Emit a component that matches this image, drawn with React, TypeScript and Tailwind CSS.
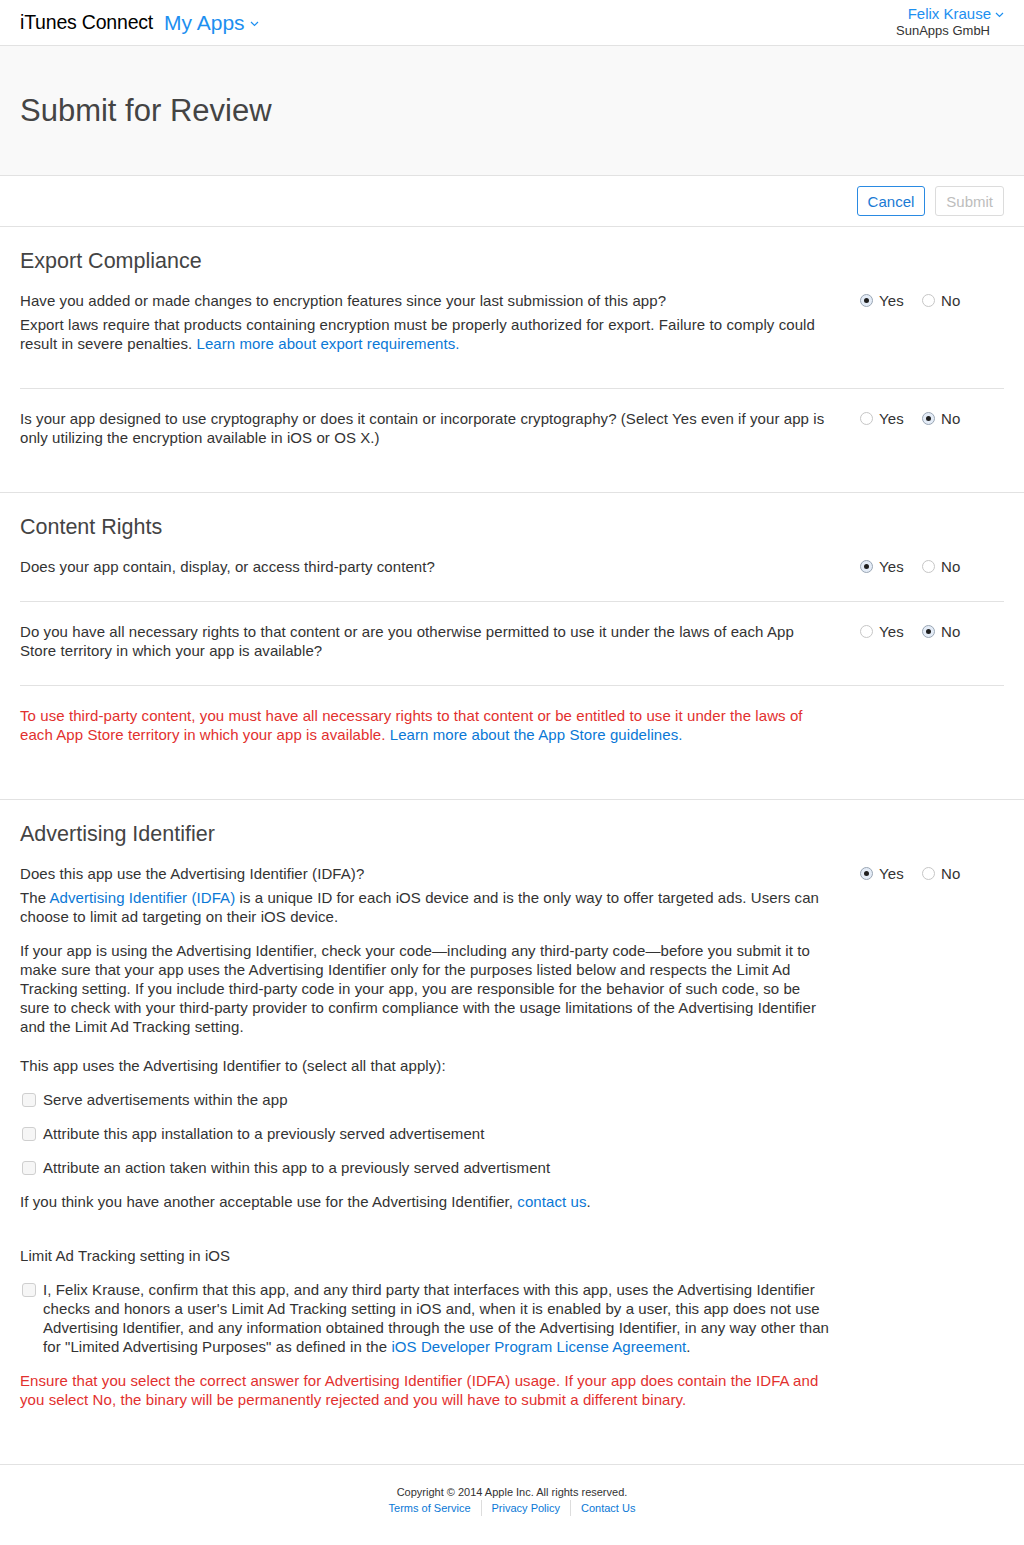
import clsx from "clsx";

const font = { fontFamily: '"Liberation Sans", Arial, sans-serif' };

function Radio({ checked }: { checked?: boolean }) {
  return (
    <span
      className={clsx(
        "flex h-[13px] w-[13px] items-center justify-center rounded-full border",
        checked ? "border-[#9aa6b4] bg-[#e4ecf7]" : "border-[#c6c6c6] bg-white"
      )}
    >
      {checked && <span className="h-[5px] w-[5px] rounded-full bg-[#1f1f1f]" />}
    </span>
  );
}

function YesNo({ yes }: { yes: boolean }) {
  return (
    <div className="flex h-[19px] items-center pl-[2px] text-[15px] text-[#333]">
      <label className="flex w-[62px] items-center gap-[6px]">
        <Radio checked={yes} />
        <span>Yes</span>
      </label>
      <label className="flex items-center gap-[6px]">
        <Radio checked={!yes} />
        <span>No</span>
      </label>
    </div>
  );
}

function Check() {
  return <span className="mt-[3px] h-[14px] w-[14px] shrink-0 rounded-[3px] border border-[#cfcfcf] bg-[#f6f6f6]" />;
}

function Link({ children }: { children: React.ReactNode }) {
  return <a className="text-[#0a78d6]">{children}</a>;
}

export default function App() {
  return (
    <div style={font} className="min-h-[1545px] bg-white text-[15px] leading-[19px] tracking-[0.08px] text-[#333]">
      {/* top bar */}
      <header className="flex h-[46px] items-center justify-between border-b border-[#e2e2e2] px-5 tracking-normal">
        <div className="flex items-center">
          <span className="text-[19.5px] tracking-[-0.2px] text-black">iTunes Connect</span>
          <span className="ml-[11px] flex items-center text-[21px] text-[#1d8ff0]">
            My Apps
            <svg className="ml-[5px] mt-[3px]" width="9" height="6" viewBox="0 0 9 6">
              <path d="M1 1l3.5 3.5L8 1" fill="none" stroke="#1d8ff0" strokeWidth="1.2" />
            </svg>
          </span>
        </div>
        <div className="mt-[5px] flex flex-col items-end self-start">
          <span className="flex items-center text-[15px] leading-[18px] text-[#1d8ff0]">
            Felix Krause
            <svg className="ml-[4px] mt-[2px]" width="9" height="6" viewBox="0 0 9 6">
              <path d="M1 1l3.5 3.5L8 1" fill="none" stroke="#1d8ff0" strokeWidth="1.2" />
            </svg>
          </span>
          <span className="mr-[14px] text-[13px] leading-[16px] text-[#333]">SunApps GmbH</span>
        </div>
      </header>

      {/* title */}
      <div className="flex h-[130px] items-center border-b border-[#e2e2e2] bg-[#f9f9f9] px-5">
        <h1 className="text-[31px] tracking-normal text-[#444]">Submit for Review</h1>
      </div>

      {/* actions */}
      <div className="flex h-[51px] items-center justify-end gap-[10px] border-b border-[#e2e2e2] px-5 tracking-normal">
        <button className="h-[30px] rounded-[3px] border border-[#2a8ae2] px-[10px] text-[15px] text-[#1a7ad4]">Cancel</button>
        <button className="h-[30px] rounded-[3px] border border-[#dcdcdc] px-[10px] text-[15px] text-[#bdbdbd]">Submit</button>
      </div>

      {/* Export Compliance */}
      <section className="border-b border-[#e2e2e2] px-5 pt-[21px]">
        <h2 className="text-[21.5px] leading-[26px] tracking-normal text-[#444]">Export Compliance</h2>
        <div className="flex border-b border-[#e2e2e2] pt-[17px] pb-[35px]">
          <div className="w-[838px]">
            <p>Have you added or made changes to encryption features since your last submission of this app?</p>
            <p className="mt-[5px]">
              Export laws require that products containing encryption must be properly authorized for export. Failure to comply could
              <br />
              result in severe penalties. <Link>Learn more about export requirements.</Link>
            </p>
          </div>
          <YesNo yes />
        </div>
        <div className="flex pt-5 pb-[45px]">
          <div className="w-[838px]">
            <p>
              Is your app designed to use cryptography or does it contain or incorporate cryptography? (Select Yes even if your app is
              <br />
              only utilizing the encryption available in iOS or OS X.)
            </p>
          </div>
          <YesNo yes={false} />
        </div>
      </section>

      {/* Content Rights */}
      <section className="border-b border-[#e2e2e2] px-5 pt-[21px]">
        <h2 className="text-[21.5px] leading-[26px] tracking-normal text-[#444]">Content Rights</h2>
        <div className="flex border-b border-[#e2e2e2] pt-[17px] pb-[25px]">
          <div className="w-[838px]">
            <p>Does your app contain, display, or access third-party content?</p>
          </div>
          <YesNo yes />
        </div>
        <div className="flex border-b border-[#e2e2e2] pt-5 pb-[25px]">
          <div className="w-[838px]">
            <p>
              Do you have all necessary rights to that content or are you otherwise permitted to use it under the laws of each App
              <br />
              Store territory in which your app is available?
            </p>
          </div>
          <YesNo yes={false} />
        </div>
        <div className="pt-5 pb-[55px]">
          <p className="w-[838px] text-[#e2302e]">
            To use third-party content, you must have all necessary rights to that content or be entitled to use it under the laws of
            <br />
            each App Store territory in which your app is available. <Link>Learn more about the App Store guidelines.</Link>
          </p>
        </div>
      </section>

      {/* Advertising Identifier */}
      <section className="border-b border-[#e2e2e2] px-5 pt-[21px] pb-[55px]">
        <h2 className="text-[21.5px] leading-[26px] tracking-normal text-[#444]">Advertising Identifier</h2>
        <div className="flex pt-[17px]">
          <div className="w-[838px]">
            <p>Does this app use the Advertising Identifier (IDFA)?</p>
            <p className="mt-[5px]">
              The <Link>Advertising Identifier (IDFA)</Link> is a unique ID for each iOS device and is the only way to offer targeted ads. Users can
              <br />
              choose to limit ad targeting on their iOS device.
            </p>
            <p className="mt-[15px]">
              If your app is using the Advertising Identifier, check your code—including any third-party code—before you submit it to
              <br />
              make sure that your app uses the Advertising Identifier only for the purposes listed below and respects the Limit Ad
              <br />
              Tracking setting. If you include third-party code in your app, you are responsible for the behavior of such code, so be
              <br />
              sure to check with your third-party provider to confirm compliance with the usage limitations of the Advertising Identifier
              <br />
              and the Limit Ad Tracking setting.
            </p>
            <p className="mt-[20px]">This app uses the Advertising Identifier to (select all that apply):</p>
            <div className="mt-[15px] flex flex-col gap-[15px]">
              {[
                "Serve advertisements within the app",
                "Attribute this app installation to a previously served advertisement",
                "Attribute an action taken within this app to a previously served advertisment",
              ].map((t) => (
                <label key={t} className="flex gap-[7px] pl-[2px]">
                  <Check />
                  <span>{t}</span>
                </label>
              ))}
            </div>
            <p className="mt-[15px]">
              If you think you have another acceptable use for the Advertising Identifier, <Link>contact us</Link>.
            </p>
            <p className="mt-[35px]">Limit Ad Tracking setting in iOS</p>
            <label className="mt-[15px] flex gap-[7px] pl-[2px]">
              <Check />
              <span>
                I, Felix Krause, confirm that this app, and any third party that interfaces with this app, uses the Advertising Identifier
                <br />
                checks and honors a user's Limit Ad Tracking setting in iOS and, when it is enabled by a user, this app does not use
                <br />
                Advertising Identifier, and any information obtained through the use of the Advertising Identifier, in any way other than
                <br />
                for "Limited Advertising Purposes" as defined in the <Link>iOS Developer Program License Agreement</Link>.
              </span>
            </label>
            <p className="mt-[15px] text-[#e2302e]">
              Ensure that you select the correct answer for Advertising Identifier (IDFA) usage. If your app does contain the IDFA and
              <br />
              you select No, the binary will be permanently rejected and you will have to submit a different binary.
            </p>
          </div>
          <YesNo yes />
        </div>
      </section>

      {/* footer */}
      <footer className="flex flex-col items-center pt-[19px] text-[11px] leading-[16px] tracking-normal">
        <p className="text-[#333]">Copyright © 2014 Apple Inc. All rights reserved.</p>
        <div className="flex text-[#0a78d6]">
          <a className="border-r border-[#ddd] pr-[10px]">Terms of Service</a>
          <a className="border-r border-[#ddd] px-[10px]">Privacy Policy</a>
          <a className="pl-[10px]">Contact Us</a>
        </div>
      </footer>
    </div>
  );
}
